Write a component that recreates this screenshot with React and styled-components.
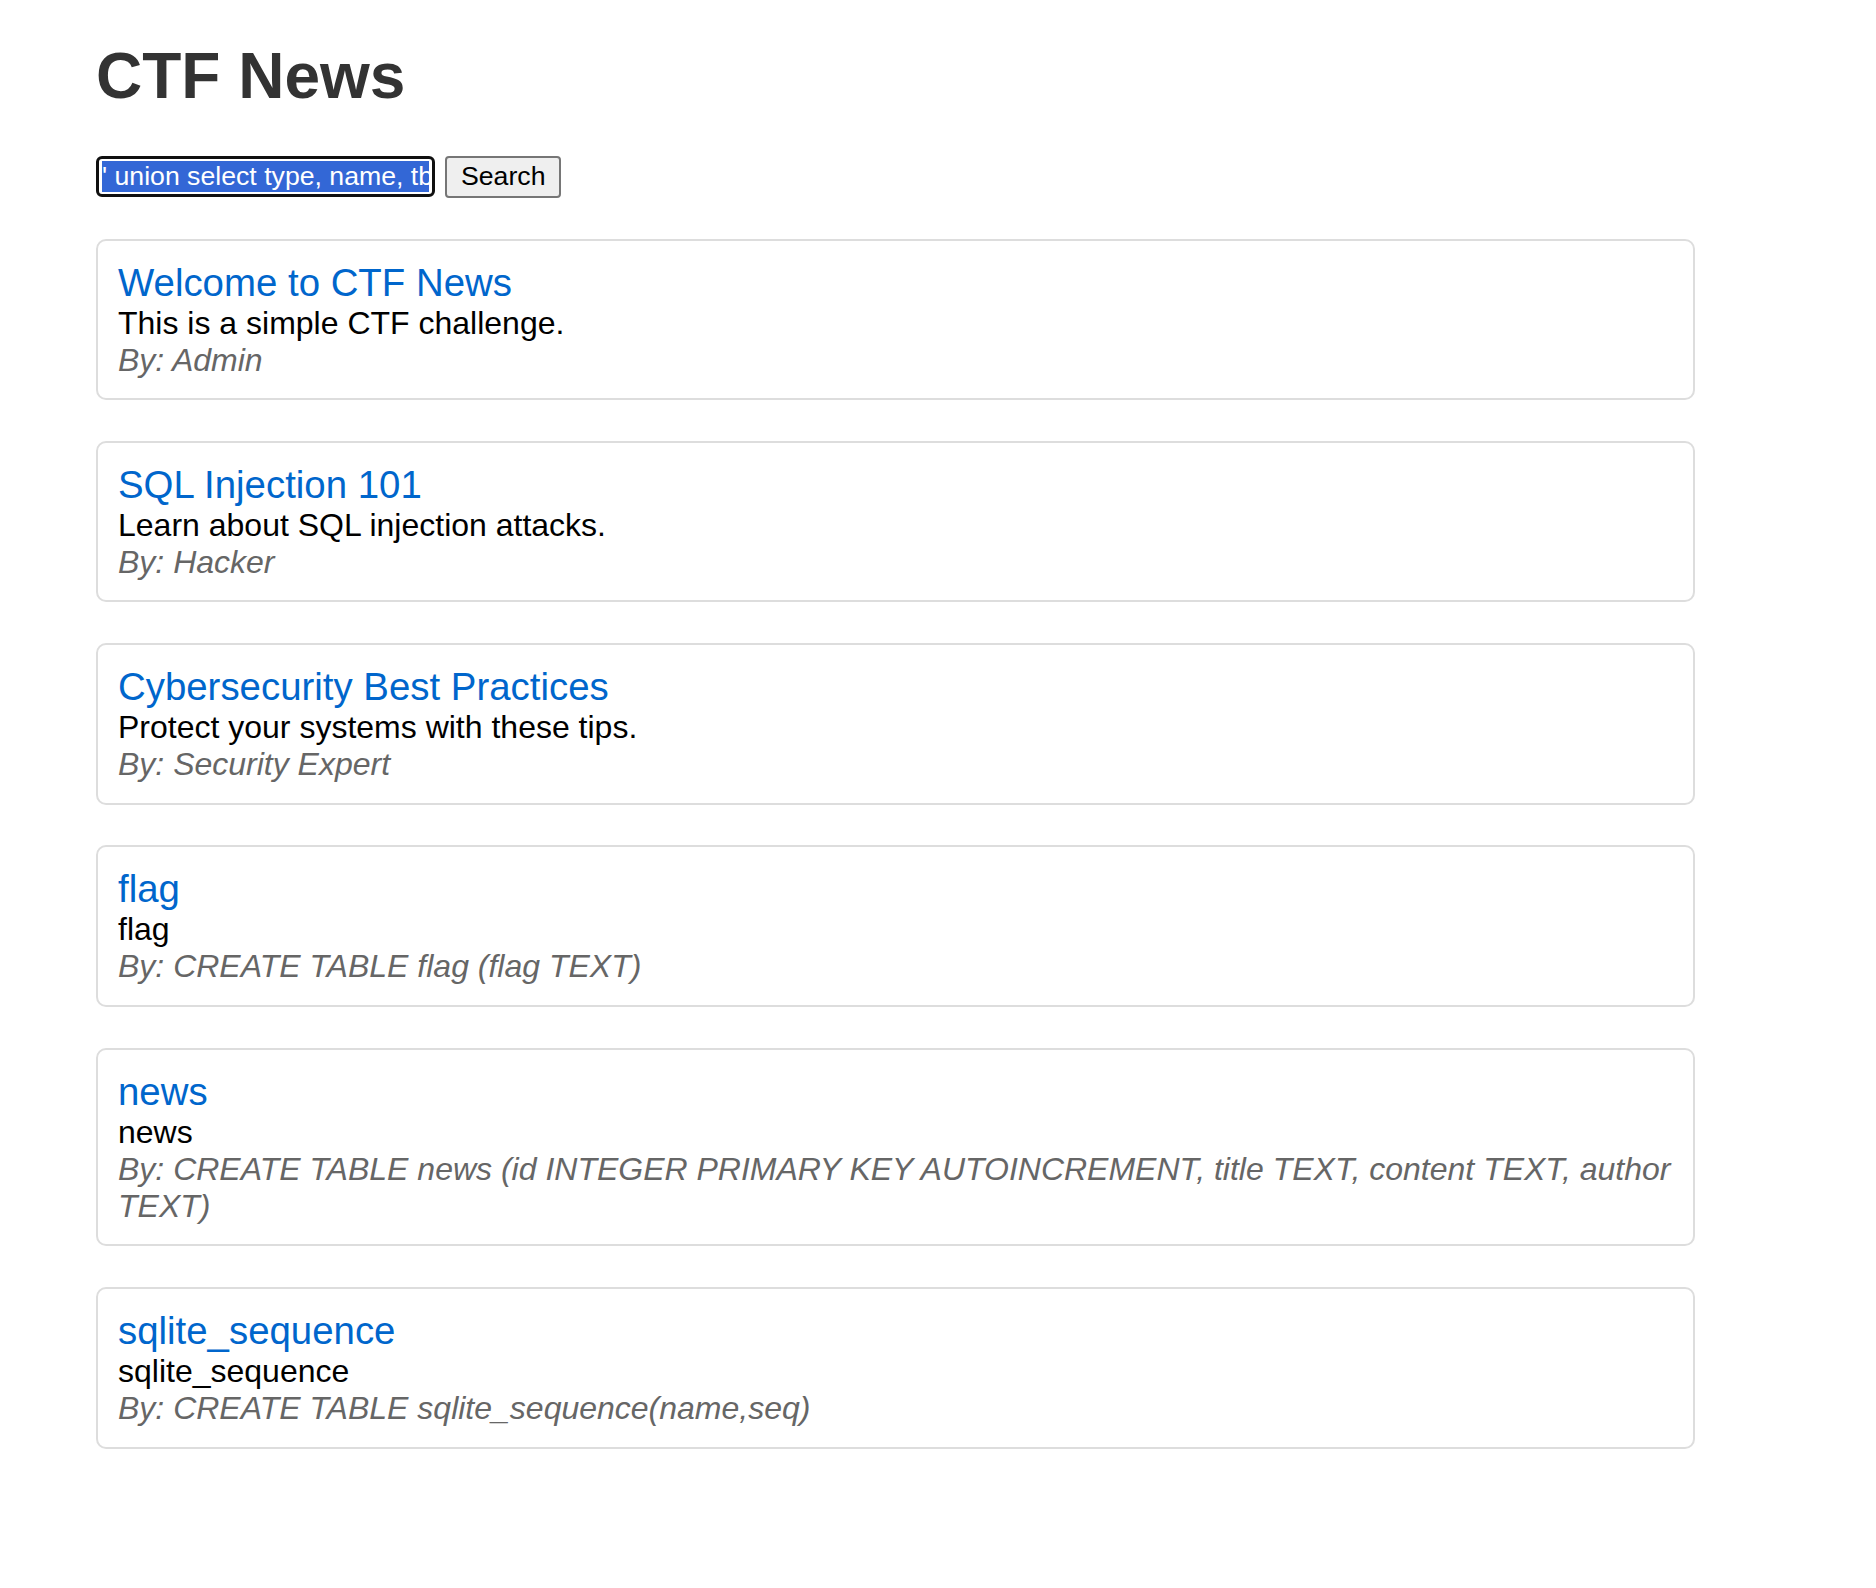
import React from "react";
import styled, { createGlobalStyle } from "styled-components";

const GlobalStyle = createGlobalStyle`
  html, body {
    margin: 0;
    padding: 0;
    background: #ffffff;
  }
  body {
    font-family: "Liberation Sans", Arial, sans-serif;
    color: #000;
  }
`;

const Page = styled.main`
  width: 1599px;
  padding: 0 0 120px 96px;
  font-family: "Liberation Sans", Arial, sans-serif;
`;

const Title = styled.h1`
  margin: 40px 0 42px;
  font-size: 64px;
  line-height: 73.6px;
  font-weight: 700;
  color: #333333;
`;

const SearchBar = styled.form`
  display: flex;
  align-items: center;
  gap: 10px;
  height: 42px;
  margin: 0 0 41px;
`;

const SearchField = styled.div`
  box-sizing: border-box;
  display: flex;
  align-items: center;
  width: 339px;
  height: 41px;
  padding: 0 3px;
  border: 3.6px solid #101010;
  border-radius: 6px;
  background: #ffffff;
`;

const FieldViewport = styled.div`
  flex: 1;
  overflow: hidden;
  white-space: nowrap;
  display: flex;
  align-items: center;
`;

const SelectedText = styled.span`
  display: inline-block;
  background: #3367d6;
  color: #ffffff;
  font-family: "Liberation Sans", Arial, sans-serif;
  font-size: 26.67px;
  line-height: 31px;
  padding-right: 40px;
`;

const SearchButton = styled.button`
  box-sizing: border-box;
  height: 42px;
  padding: 0 14px;
  border: 2px solid #767676;
  border-radius: 4px;
  background: #efefef;
  color: #000;
  font-family: "Liberation Sans", Arial, sans-serif;
  font-size: 26.67px;
  line-height: 30.6px;
  cursor: pointer;
`;

const NewsList = styled.section`
  display: flex;
  flex-direction: column;
  gap: 40.8px;
`;

const Card = styled.article`
  box-sizing: border-box;
  border: 2px solid #dddddd;
  border-radius: 10px;
  padding: 20px 20px 19.5px;
`;

const CardTitle = styled.h3`
  margin: 0;
  font-size: 38.4px;
  line-height: normal;
  font-weight: 400;
  color: #0066cc;
`;

const CardContent = styled.p`
  margin: 0;
  font-size: 32px;
  line-height: normal;
  color: #000000;
`;

const CardAuthor = styled.p`
  margin: 0;
  font-size: 32px;
  line-height: normal;
  font-style: italic;
  color: #666666;
`;

const news = [
  {
    title: "Welcome to CTF News",
    content: "This is a simple CTF challenge.",
    author: "Admin",
  },
  {
    title: "SQL Injection 101",
    content: "Learn about SQL injection attacks.",
    author: "Hacker",
  },
  {
    title: "Cybersecurity Best Practices",
    content: "Protect your systems with these tips.",
    author: "Security Expert",
  },
  {
    title: "flag",
    content: "flag",
    author: "CREATE TABLE flag (flag TEXT)",
  },
  {
    title: "news",
    content: "news",
    author:
      "CREATE TABLE news (id INTEGER PRIMARY KEY AUTOINCREMENT, title TEXT, content TEXT, author TEXT)",
  },
  {
    title: "sqlite_sequence",
    content: "sqlite_sequence",
    author: "CREATE TABLE sqlite_sequence(name,seq)",
  },
];

export default function App() {
  return (
    <>
      <GlobalStyle />
      <Page>
        <Title>CTF News</Title>
        <SearchBar onSubmit={(e) => e.preventDefault()}>
          <SearchField role="textbox" aria-label="search">
            <FieldViewport>
              <SelectedText>' union select type, name, tbl_name</SelectedText>
            </FieldViewport>
          </SearchField>
          <SearchButton type="submit">Search</SearchButton>
        </SearchBar>
        <NewsList>
          {news.map((item, i) => (
            <Card key={i}>
              <CardTitle>{item.title}</CardTitle>
              <CardContent>{item.content}</CardContent>
              <CardAuthor>By: {item.author}</CardAuthor>
            </Card>
          ))}
        </NewsList>
      </Page>
    </>
  );
}
